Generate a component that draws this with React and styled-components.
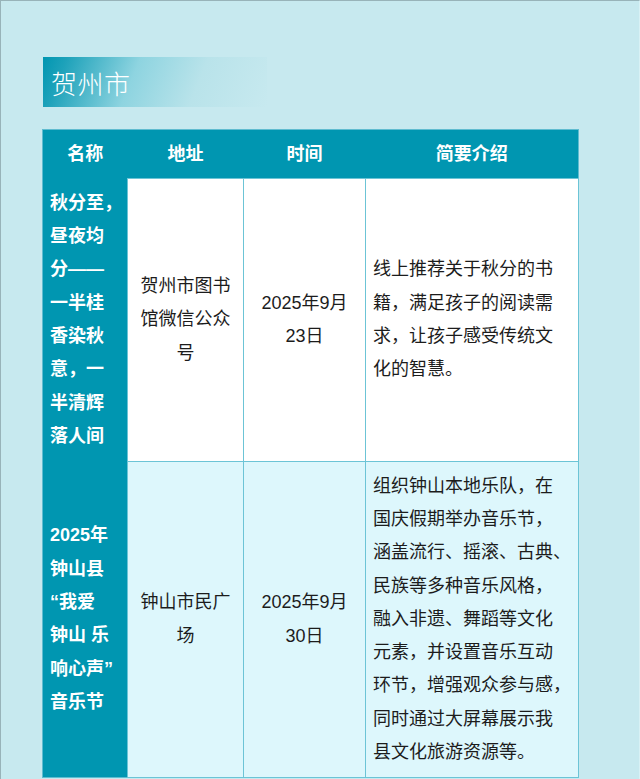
import React from 'react';
import styled, { createGlobalStyle } from 'styled-components';

const GlobalStyle = createGlobalStyle`
  html, body {
    margin: 0;
    padding: 0;
    background: #c7e9ef;
  }
  body {
    font-family: 'Liberation Sans', 'Noto Sans CJK SC', sans-serif;
    color: #1a1a1a;
  }
`;

const Page = styled.div`
  box-sizing: border-box;
  width: 640px;
  min-height: 779px;
  padding: 57px 0 0 41px;
  background: #c7e9ef;
  border-top: 1px solid #98b3b9;
  border-left: 1px solid #98b3b9;
  border-right: 1px solid #d8f1f5;
`;

const RegionTitle = styled.h2`
  box-sizing: border-box;
  width: 224px;
  height: 50px;
  margin: -1px 0 22px 1px;
  padding: 0 0 0 8px;
  display: flex;
  align-items: center;
  background: linear-gradient(112deg, #0096b1 0%, #1ea2ba 10%, #8ed4e0 40%, #b9e3ea 68%, rgba(199, 233, 239, 0) 100%);
  color: #ffffff;
  font-family: 'Noto Sans CJK SC', sans-serif;
  font-size: 26px;
  font-weight: 200;
  letter-spacing: 0.5px;
`;

const Table = styled.table`
  width: 536px;
  table-layout: fixed;
  border-collapse: collapse;
  border: 1px solid #5fbcd0;
  font-size: 18px;
  line-height: 33.3px;
`;

const HeadCell = styled.th`
  padding: 7.5px 0;
  background: #0096b1;
  color: #ffffff;
  font-weight: 700;
  text-align: center;
  border: none;
`;

const NameCell = styled.td`
  padding: 8px 0 8px 7px;
  background: #0096b1;
  color: #ffffff;
  font-weight: 700;
  white-space: nowrap;
  vertical-align: middle;
  border: none;
  border-right: 1px solid #6cc4d6;
`;

const Cell = styled.td`
  padding: ${(p) => (p.$align === 'left' ? '8px 0 8px 7px' : '8px')};
  background: ${(p) => (p.$tone === 'light' ? '#ddf7fc' : '#ffffff')};
  text-align: ${(p) => p.$align || 'center'};
  white-space: ${(p) => (p.$align === 'left' ? 'nowrap' : 'normal')};
  vertical-align: middle;
  border: 1px solid #6cc4d6;
  color: #1c1c1c;
`;

const Lines = ({ lines }) =>
  lines.map((line, i) => (
    <React.Fragment key={i}>
      {line}
      {i < lines.length - 1 && <br />}
    </React.Fragment>
  ));

const events = [
  {
    id: 1,
    tone: 'white',
    name: ['秋分至，', '昼夜均', '分——', '一半桂', '香染秋', '意，一', '半清辉', '落人间'],
    place: '贺州市图书馆微信公众号',
    date: '2025年9月23日',
    intro: ['线上推荐关于秋分的书', '籍，满足孩子的阅读需', '求，让孩子感受传统文', '化的智慧。'],
  },
  {
    id: 2,
    tone: 'light',
    name: ['2025年', '钟山县', '“我爱', '钟山 乐', '响心声”', '音乐节'],
    place: '钟山市民广场',
    date: '2025年9月30日',
    intro: [
      '组织钟山本地乐队，在',
      '国庆假期举办音乐节，',
      '涵盖流行、摇滚、古典、',
      '民族等多种音乐风格，',
      '融入非遗、舞蹈等文化',
      '元素，并设置音乐互动',
      '环节，增强观众参与感，',
      '同时通过大屏幕展示我',
      '县文化旅游资源等。',
    ],
  },
];

const App = () => {
  return (
    <Page>
      <GlobalStyle />
      <RegionTitle>贺州市</RegionTitle>
      <Table>
        <colgroup>
          <col style={{ width: 85 }} />
          <col style={{ width: 116 }} />
          <col style={{ width: 122 }} />
          <col style={{ width: 213 }} />
        </colgroup>
        <thead>
          <tr>
            <HeadCell>名称</HeadCell>
            <HeadCell>地址</HeadCell>
            <HeadCell>时间</HeadCell>
            <HeadCell>简要介绍</HeadCell>
          </tr>
        </thead>
        <tbody>
          {events.map((ev) => (
            <tr key={ev.id}>
              <NameCell>
                <Lines lines={ev.name} />
              </NameCell>
              <Cell $tone={ev.tone}>{ev.place}</Cell>
              <Cell $tone={ev.tone}>{ev.date}</Cell>
              <Cell $tone={ev.tone} $align="left">
                <Lines lines={ev.intro} />
              </Cell>
            </tr>
          ))}
        </tbody>
      </Table>
    </Page>
  );
};

export default App;
